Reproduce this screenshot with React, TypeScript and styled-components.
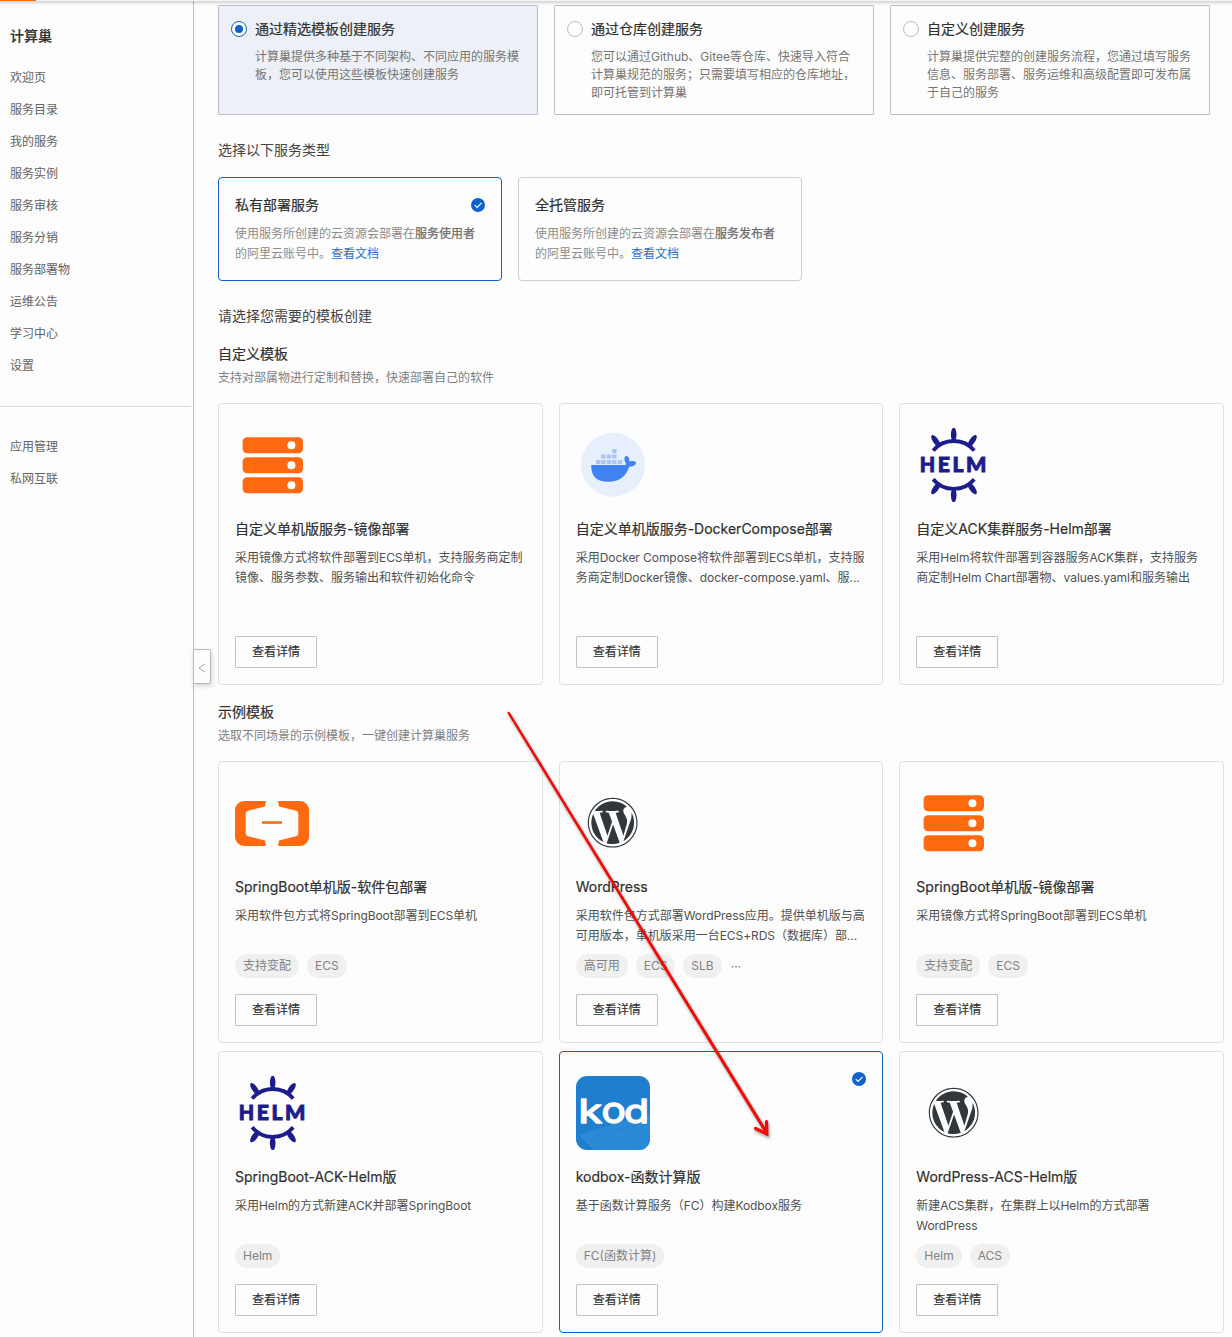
import React from 'react';
import styled, { createGlobalStyle, css } from 'styled-components';
import { FaWordpress } from 'react-icons/fa';

const Global = createGlobalStyle`
  * { box-sizing: border-box; }
  html, body { margin: 0; padding: 0; background: #fdfdfd; }
  body {
    font-family: Inter, "Noto Sans CJK SC", sans-serif;
    font-size: 12px;
    color: #333;
    overflow: hidden;
  }
`;

const Page = styled.div`
  position: relative;
  width: 1232px;
  height: 1337px;
  display: flex;
  flex-direction: column;
  overflow: hidden;
`;

const TopBar = styled.header`
  flex: none;
  height: 1px;
  background: #f4f4f4;
  box-shadow: 0 1px 3px 1px rgba(0, 0, 0, 0.19);
  z-index: 1;
`;

const TopAccent = styled.div`
  width: 36px;
  height: 1px;
  background: #ff6a00;
`;

const Body = styled.div`
  flex: 1;
  display: flex;
  min-height: 0;
`;

const Sidebar = styled.nav`
  position: relative;
  flex: none;
  width: 194px;
  border-right: 1px solid #bcbdc0;
  padding-top: 23px;
`;

const SideTitle = styled.h1`
  margin: 0 0 14px;
  padding-left: 10px;
  font-size: 14px;
  line-height: 24px;
  font-weight: 500;
  -webkit-text-stroke: 0.2px #333;
  color: #333;
`;

const SideList = styled.ul`
  list-style: none;
  margin: 0;
  padding: 0 0 0 10px;
`;

const SideItem = styled.li`
  height: 32px;
  line-height: 32px;
  color: #636363;
`;

const SideDivider = styled.hr`
  border: 0;
  height: 1px;
  margin: 24px 2px 24px 0;
  background: #dcdcdc;
`;

const CollapseHandle = styled.button`
  position: absolute;
  left: 193px;
  top: 648px;
  width: 18px;
  height: 35px;
  padding: 2px 0 0;
  display: flex;
  align-items: center;
  justify-content: center;
  background: #fdfdfd;
  border: 1px solid #b7bac4;
  border-radius: 0 2px 2px 0;
  box-shadow: 1px 2px 5px rgba(0, 0, 0, 0.16);
`;

const Main = styled.main`
  flex: 1;
  min-width: 0;
  padding: 4px 8px 0 24px;
`;

const ModeRow = styled.div`
  display: flex;
  gap: 16px;
`;

const ModeCard = styled.label<{ $active?: boolean }>`
  display: flex;
  gap: 8px;
  width: 320px;
  height: 110px;
  padding: 12px;
  border: 1px solid #b9bfca;
  border-radius: 1px;
  background: ${p => (p.$active ? '#edf0f7' : 'transparent')};
`;

const RadioDot = styled.span<{ $active?: boolean }>`
  flex: none;
  width: 16px;
  height: 16px;
  margin-top: 3px;
  border-radius: 50%;
  border: 1px solid ${p => (p.$active ? '#0f62cc' : '#b9bcc2')};
  background: #fff;
  display: flex;
  align-items: center;
  justify-content: center;
  ${p =>
    p.$active &&
    css`
      &::after {
        content: '';
        width: 8px;
        height: 8px;
        border-radius: 50%;
        background: #0f62cc;
      }
    `}
`;

const mediumText = css`
  font-size: 14px;
  line-height: 20px;
  font-weight: 400;
  color: #303030;
  -webkit-text-stroke: 0.2px #303030;
  white-space: nowrap;
`;

const ModeTitle = styled.div`
  ${mediumText}
  margin-bottom: 9px;
  padding-top: 1px;
`;

const Line = styled.div`
  white-space: nowrap;
`;

const ModeText = styled.div`
  line-height: 18px;
  color: #757575;
`;

const SectionLabel = styled.h2`
  margin: 25px 0 17px;
  font-size: 14px;
  line-height: 20px;
  font-weight: 400;
  color: #444;
`;

const TypeCard = styled.div<{ $active?: boolean }>`
  width: 284px;
  height: 104px;
  padding: 17px 16px 15px;
  border: 1px solid ${p => (p.$active ? '#0f62cc' : '#cfcfcf')};
  border-radius: 4px;
`;

const TypeHead = styled.div`
  display: flex;
  align-items: center;
  justify-content: space-between;
  margin-bottom: 9px;
`;

const TypeTitle = styled.div`
  ${mediumText}
`;

const TypeText = styled.div`
  line-height: 20px;
  color: #8c8c8c;
`;

const Strong = styled.span`
  color: #6c6c6c;
  -webkit-text-stroke: 0.25px #6c6c6c;
`;

const DocLink = styled.a`
  color: #1f72d4;
`;

const GroupTitle = styled.h3<{ $top: number }>`
  ${mediumText}
  margin: ${p => p.$top}px 0 4px;
`;

const GroupNote = styled.p`
  margin: 0 0 16px;
  line-height: 19px;
  color: #808080;
`;

const Grid = styled.div`
  display: grid;
  grid-template-columns: repeat(3, 1fr);
  grid-auto-rows: 282px;
  gap: 8px 16px;
`;

const Card = styled.article<{ $active?: boolean }>`
  position: relative;
  min-width: 0;
  display: flex;
  flex-direction: column;
  align-items: flex-start;
  padding: 24px 16px 16px;
  border: 1px solid ${p => (p.$active ? '#0f62cc' : '#e0e0e0')};
  border-radius: 4px;
`;

const CardCheck = styled.span`
  position: absolute;
  top: 20px;
  right: 16px;
  display: flex;
`;

const LogoBox = styled.div`
  width: 74px;
  height: 74px;
  display: flex;
  align-items: center;
  justify-content: center;
  margin-bottom: 17px;
  svg { display: block; }
`;

const CardTitle = styled.div`
  ${mediumText}
  margin-bottom: 9px;
`;

const CardText = styled.div`
  height: 40px;
  line-height: 20px;
  color: #505050;
`;

const Latin = styled.span`
  letter-spacing: -0.07px;
`;

const TagRow = styled.div`
  display: flex;
  align-items: center;
  gap: 8px;
  height: 24px;
  margin: 8px 0 16px;
`;

const Tag = styled.span`
  height: 24px;
  line-height: 24px;
  padding: 0 8px;
  border-radius: 12px;
  background: #f0f0f0;
  color: #828282;
`;

const More = styled.span`
  padding-left: 1px;
  color: #777;
`;

const DetailButton = styled.button`
  width: 82px;
  height: 32px;
  padding: 0 0 4px;
  border: 1px solid #c0c3c8;
  border-radius: 1px;
  background: #fdfdfd;
  font: inherit;
  color: #303030;
  -webkit-text-stroke: 0.15px #303030;
`;

const ArrowOverlay = styled.svg`
  position: absolute;
  left: 500px;
  top: 704px;
  pointer-events: none;
  filter: drop-shadow(1px 2px 1.5px rgba(0, 0, 0, 0.4));
`;

const CheckBadge = () => (
  <svg width="14" height="14" viewBox="0 0 14 14">
    <circle cx="7" cy="7" r="7" fill="#0f62cc" />
    <path d="M3.7 7.1 6.1 9.4 10.6 4.9" fill="none" stroke="#fff" strokeWidth="1.2" />
  </svg>
);

const ServerLogo = () => (
  <svg width="74" height="74">
    {[9, 29, 49].map(y => (
      <g key={y}>
        <rect x="7.6" y={y + 0.2} width="60.4" height="16" rx="4.5" fill="#ff6a10" />
        <circle cx="56.4" cy={y + 8.2} r="4" fill="#fff" />
      </g>
    ))}
  </svg>
);

const crates: [number, number][] = [
  [36.2, 21.1],
  [25.2, 26.5], [30.8, 26.5], [36.2, 26.5],
  [20, 32], [25.2, 32], [30.8, 32], [36.2, 32], [41.8, 32],
];

const DockerLogo = () => (
  <svg width="74" height="74">
    <circle cx="37" cy="36.7" r="32" fill="#e7effd" />
    {crates.map(([x, y]) => (
      <rect key={`${x}-${y}`} x={x} y={y} width="4.4" height="4" fill="#aac5f5" />
    ))}
    <path
      d="M15.2 37H48.5C49.8 37 50.2 36.3 49.8 35.2C48.2 33 48 30 49.4 28C51.8 27.6 53.6 29.8 53.4 33.6C55.5 32.6 58 32.9 60.4 34.4C59.2 37.4 56.6 38.6 53.4 38.6C50 48.5 43.5 53.8 32.5 53.8C20.5 53.8 15 48.5 15.2 37Z"
      fill="#3f82f0"
    />
  </svg>
);

const spokes: [number, number, number][] = [
  [37.7, 6.6, 0], [19.8, 13, -35], [56.2, 13, 35],
  [37.7, 67.2, 0], [19.8, 60.4, 35], [56.2, 60.4, -35],
];

const helmLetters: [string, number, number][] = [
  ['H', 3.8, 15.4],
  ['E', 21.8, 12.2],
  ['L', 36.4, 11],
  ['M', 50, 20.4],
];

const HelmLogo = () => (
  <svg width="74" height="74">
    <g fill="none" stroke="#1d1c8c" strokeWidth="3.8">
      <path d="M17.2 22.6C27.5 9.8 48 9.8 58.2 22.6" />
      <path d="M17.2 51.2C27.5 64 48 64 58.2 51.2" />
    </g>
    {spokes.map(([x, y, r]) => (
      <ellipse
        key={`${x}-${y}`}
        cx={x}
        cy={y}
        rx="2.8"
        ry="7"
        fill="#1d1c8c"
        transform={`rotate(${r} ${x} ${y})`}
      />
    ))}
    {helmLetters.map(([letter, x, length]) => (
      <text
        key={letter}
        x={x}
        y="44.3"
        textLength={length}
        lengthAdjust="spacingAndGlyphs"
        fontFamily="Lato, sans-serif"
        fontWeight="900"
        fontSize="21"
        fill="#1d1c8c"
        stroke="#1d1c8c"
        strokeWidth="0.9"
      >
        {letter}
      </text>
    ))}
  </svg>
);

const BracketLogo = () => (
  <svg width="74" height="74" fill="#ff6a10">
    <path d="M31 15H9A9 9 0 0 0 0 24V51A9 9 0 0 0 9 60H31L30 54.4L13 50.3Q10.7 49.6 10.7 47.5V27.5Q10.7 25.4 13 24.7L30 20.4Z" />
    <path d="M43 15H65A9 9 0 0 1 74 24V51A9 9 0 0 1 65 60H43L44 54.4L61 50.3Q63.3 49.6 63.3 47.5V27.5Q63.3 25.4 61 24.7L44 20.4Z" />
    <rect x="27" y="35.2" width="20" height="2.6" />
  </svg>
);

const kodLetters: [string, number, number][] = [
  ['k', 2.6, 23.6],
  ['o', 25.4, 24.4],
  ['d', 48, 25],
];

const KodLogo = () => (
  <svg width="74" height="74">
    <defs>
      <clipPath id="kodTile">
        <rect width="74" height="74" rx="11" />
      </clipPath>
    </defs>
    <g clipPath="url(#kodTile)">
      <rect width="74" height="74" fill="#1f7fce" />
      <path d="M3 60Q5 57.5 10 56L74 38V74H16Z" fill="#2b8ad8" />
      <path d="M3 60L17 74" stroke="#1a74c0" strokeWidth="1" />
      <path d="M16 61L74 45" stroke="#2583d1" strokeWidth="1" />
    </g>
    {kodLetters.map(([letter, x, length]) => (
      <text
        key={letter}
        x={x}
        y="47.4"
        textLength={length}
        lengthAdjust="spacingAndGlyphs"
        fontFamily="Inter, sans-serif"
        fontWeight="400"
        fontSize={letter === 'o' ? 36 : 33}
        fill="#fff"
        stroke="#fff"
        strokeWidth="1.4"
        strokeLinejoin="round"
      >
        {letter}
      </text>
    ))}
  </svg>
);

const WordPressLogo = () => <FaWordpress size={51.4} color="#32373c" />;

const logos = {
  server: ServerLogo,
  docker: DockerLogo,
  helm: HelmLogo,
  bracket: BracketLogo,
  wordpress: WordPressLogo,
  kod: KodLogo,
};

interface Template {
  logo: keyof typeof logos;
  title: string;
  text: string[];
  tags?: string[];
  more?: boolean;
  active?: boolean;
}

const menu = ['欢迎页', '服务目录', '我的服务', '服务实例', '服务审核', '服务分销', '服务部署物', '运维公告', '学习中心', '设置'];
const extraMenu = ['应用管理', '私网互联'];

const modes = [
  {
    title: '通过精选模板创建服务',
    text: ['计算巢提供多种基于不同架构、不同应用的服务模', '板，您可以使用这些模板快速创建服务'],
    active: true,
  },
  {
    title: '通过仓库创建服务',
    text: ['您可以通过Github、Gitee等仓库、快速导入符合', '计算巢规范的服务；只需要填写相应的仓库地址，', '即可托管到计算巢'],
  },
  {
    title: '自定义创建服务',
    text: ['计算巢提供完整的创建服务流程，您通过填写服务', '信息、服务部署、服务运维和高级配置即可发布属', '于自己的服务'],
  },
];

const types = [
  { title: '私有部署服务', who: '服务使用者', active: true },
  { title: '全托管服务', who: '服务发布者' },
];

const customTemplates: Template[] = [
  {
    logo: 'server',
    title: '自定义单机版服务-镜像部署',
    text: ['采用镜像方式将软件部署到ECS单机，支持服务商定制', '镜像、服务参数、服务输出和软件初始化命令'],
  },
  {
    logo: 'docker',
    title: '自定义单机版服务-DockerCompose部署',
    text: ['采用Docker Compose将软件部署到ECS单机，支持服', '务商定制Docker镜像、docker-compose.yaml、服...'],
  },
  {
    logo: 'helm',
    title: '自定义ACK集群服务-Helm部署',
    text: ['采用Helm将软件部署到容器服务ACK集群，支持服务', '商定制Helm Chart部署物、values.yaml和服务输出'],
  },
];

const sampleTemplates: Template[] = [
  {
    logo: 'bracket',
    title: 'SpringBoot单机版-软件包部署',
    text: ['采用软件包方式将SpringBoot部署到ECS单机'],
    tags: ['支持变配', 'ECS'],
  },
  {
    logo: 'wordpress',
    title: 'WordPress',
    text: ['采用软件包方式部署WordPress应用。提供单机版与高', '可用版本，单机版采用一台ECS+RDS（数据库）部...'],
    tags: ['高可用', 'ECS', 'SLB'],
    more: true,
  },
  {
    logo: 'server',
    title: 'SpringBoot单机版-镜像部署',
    text: ['采用镜像方式将SpringBoot部署到ECS单机'],
    tags: ['支持变配', 'ECS'],
  },
  {
    logo: 'helm',
    title: 'SpringBoot-ACK-Helm版',
    text: ['采用Helm的方式新建ACK并部署SpringBoot'],
    tags: ['Helm'],
  },
  {
    logo: 'kod',
    title: 'kodbox-函数计算版',
    text: ['基于函数计算服务（FC）构建Kodbox服务'],
    tags: ['FC(函数计算)'],
    active: true,
  },
  {
    logo: 'wordpress',
    title: 'WordPress-ACS-Helm版',
    text: ['新建ACS集群，在集群上以Helm的方式部署', 'WordPress'],
    tags: ['Helm', 'ACS'],
  },
];

const MixedText = ({ text }: { text: string }) => (
  <Line>
    {text
      .split(/([\x20-\x7e]+)/)
      .map((part, i) => (i % 2 ? <Latin key={i}>{part}</Latin> : part))}
  </Line>
);

const TemplateCard = ({ item }: { item: Template }) => {
  const Logo = logos[item.logo];
  return (
    <Card $active={item.active}>
      {item.active && (
        <CardCheck>
          <CheckBadge />
        </CardCheck>
      )}
      <LogoBox>
        <Logo />
      </LogoBox>
      <CardTitle>{item.title}</CardTitle>
      <CardText>
        {item.text.map(t => (
          <MixedText key={t} text={t} />
        ))}
      </CardText>
      <TagRow>
        {item.tags?.map(t => (
          <Tag key={t}>{t}</Tag>
        ))}
        {item.more && <More>···</More>}
      </TagRow>
      <DetailButton>查看详情</DetailButton>
    </Card>
  );
};

export default function App() {
  return (
    <Page>
      <Global />
      <TopBar>
        <TopAccent />
      </TopBar>
      <Body>
        <Sidebar>
          <SideTitle>计算巢</SideTitle>
          <SideList>
            {menu.map(m => (
              <SideItem key={m}>{m}</SideItem>
            ))}
          </SideList>
          <SideDivider />
          <SideList>
            {extraMenu.map(m => (
              <SideItem key={m}>{m}</SideItem>
            ))}
          </SideList>
          <CollapseHandle>
            <svg width="8" height="10" viewBox="0 0 8 10">
              <path d="M7 0.8 1 5 7 9.2" fill="none" stroke="#a5a5a5" strokeWidth="1" />
            </svg>
          </CollapseHandle>
        </Sidebar>
        <Main>
          <ModeRow>
            {modes.map(m => (
              <ModeCard key={m.title} $active={m.active}>
                <RadioDot $active={m.active} />
                <div>
                  <ModeTitle>{m.title}</ModeTitle>
                  <ModeText>
                    {m.text.map(t => (
                      <Line key={t}>{t}</Line>
                    ))}
                  </ModeText>
                </div>
              </ModeCard>
            ))}
          </ModeRow>
          <SectionLabel>选择以下服务类型</SectionLabel>
          <ModeRow>
            {types.map(t => (
              <TypeCard key={t.title} $active={t.active}>
                <TypeHead>
                  <TypeTitle>{t.title}</TypeTitle>
                  {t.active && <CheckBadge />}
                </TypeHead>
                <TypeText>
                  <Line>
                    使用服务所创建的云资源会部署在<Strong>{t.who}</Strong>
                  </Line>
                  <Line>
                    的阿里云账号中。<DocLink>查看文档</DocLink>
                  </Line>
                </TypeText>
              </TypeCard>
            ))}
          </ModeRow>
          <SectionLabel>请选择您需要的模板创建</SectionLabel>
          <GroupTitle $top={18}>自定义模板</GroupTitle>
          <GroupNote>支持对部属物进行定制和替换，快速部署自己的软件</GroupNote>
          <Grid>
            {customTemplates.map(t => (
              <TemplateCard key={t.title} item={t} />
            ))}
          </Grid>
          <GroupTitle $top={17}>示例模板</GroupTitle>
          <GroupNote>选取不同场景的示例模板，一键创建计算巢服务</GroupNote>
          <Grid>
            {sampleTemplates.map(t => (
              <TemplateCard key={t.title} item={t} />
            ))}
          </Grid>
        </Main>
      </Body>
      <ArrowOverlay width="280" height="445">
        <path d="M7.2 8.8 9.2 7.4 267.8 427.8 265.2 429.6Z" fill="#fb0505" />
        <path
          d="M255.5 424.5 266.8 430 266.5 417.5"
          fill="none"
          stroke="#fb0505"
          strokeWidth="3.2"
          strokeLinecap="round"
        />
      </ArrowOverlay>
    </Page>
  );
}
